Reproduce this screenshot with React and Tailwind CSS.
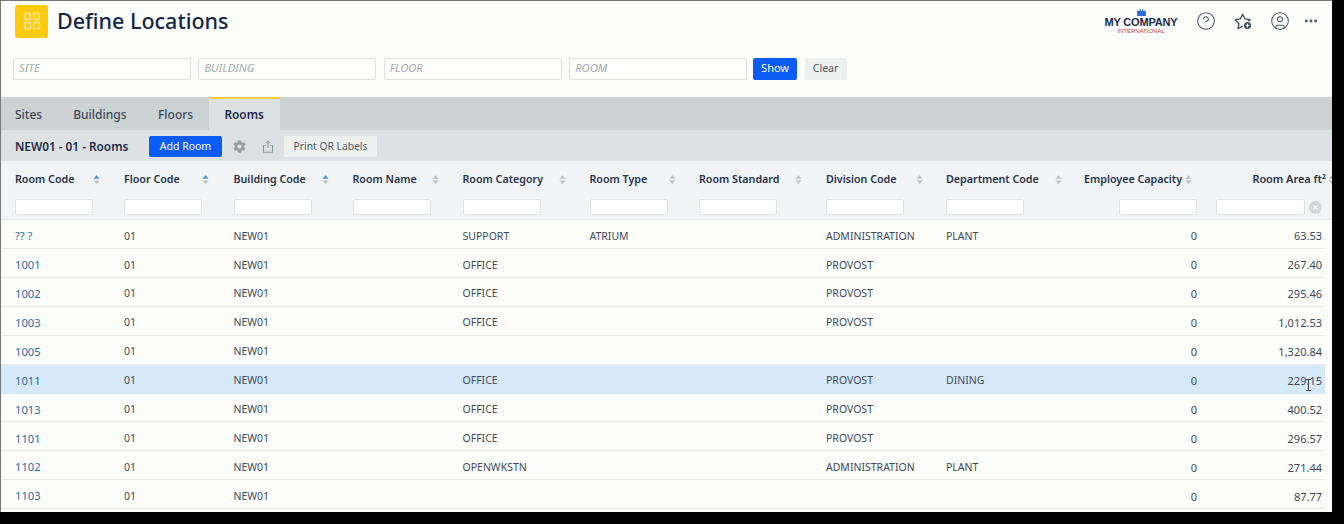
import React from "react";
import { CircleHelp, CircleUser, Ellipsis } from "lucide-react";
import { FaCog } from "react-icons/fa";

const font = { fontFamily: '"Noto Sans", sans-serif' };
const cols = "grid grid-cols-[109px_109.5px_119px_110px_127px_109.5px_127px_120px_138px_132px_109px]";

const headers = [
  ["Room Code", "asc", "w-[85px]"],
  ["Floor Code", "asc", "w-[85px]"],
  ["Building Code", "asc", "w-[95px]"],
  ["Room Name", "", "w-[86px]"],
  ["Room Category", "", "w-[103px]"],
  ["Room Type", "", "w-[86px]"],
  ["Room Standard", "", "w-[103px]"],
  ["Division Code", "", "w-[97px]"],
  ["Department Code", "", "w-[116px]"],
];

const rows = [
  ["?? ?", "01", "NEW01", "", "SUPPORT", "ATRIUM", "", "ADMINISTRATION", "PLANT", "0", "63.53"],
  ["1001", "01", "NEW01", "", "OFFICE", "", "", "PROVOST", "", "0", "267.40"],
  ["1002", "01", "NEW01", "", "OFFICE", "", "", "PROVOST", "", "0", "295.46"],
  ["1003", "01", "NEW01", "", "OFFICE", "", "", "PROVOST", "", "0", "1,012.53"],
  ["1005", "01", "NEW01", "", "", "", "", "", "", "0", "1,320.84"],
  ["1011", "01", "NEW01", "", "OFFICE", "", "", "PROVOST", "DINING", "0", "229.15"],
  ["1013", "01", "NEW01", "", "OFFICE", "", "", "PROVOST", "", "0", "400.52"],
  ["1101", "01", "NEW01", "", "OFFICE", "", "", "PROVOST", "", "0", "296.57"],
  ["1102", "01", "NEW01", "", "OPENWKSTN", "", "", "ADMINISTRATION", "PLANT", "0", "271.44"],
  ["1103", "01", "NEW01", "", "", "", "", "", "", "0", "87.77"],
];

function Sort({ active }) {
  return (
    <svg width="7" height="11" viewBox="0 0 8 12" className="shrink-0">
      <path d="M4 1 7.5 5H.5z" fill={active ? "#3f8fe0" : "#bcc2c6"} />
      <path d="M4 11 .5 7h7z" fill="#bcc2c6" />
    </svg>
  );
}

function FilterBox({ className }) {
  return <div className={`h-[16px] mt-[3px] bg-white border border-[#dfe2e4] rounded-[2px] ${className}`} />;
}

function SearchField({ label }) {
  return (
    <div className="w-[177.9px] h-[22px] border border-[#dcdfe0] rounded-[2px] bg-[#fefefc] pl-[5px] flex items-center text-[11.2px] italic text-[#a6abb0]">
      {label}
    </div>
  );
}

function Tab({ label, active, className }) {
  return (
    <div
      className={
        active
          ? "h-[33px] w-[71px] flex items-center justify-center bg-[#dde1e4] border-t-2 border-[#f2d23c] text-[#1b2a4a] font-semibold text-[11.8px] " + (className || "")
          : "h-[33px] flex items-center text-[#3c4a5c] font-medium text-[12px] pt-[2px] " + (className || "")
      }
    >
      {label}
    </div>
  );
}

export default function App() {
  return (
    <div className="w-[1344px] h-[524px] bg-black overflow-hidden" style={font}>
      <div className="w-[1332px] h-[512px] bg-[#fdfdfb] border-l border-t border-[#77797a] overflow-hidden relative">
        {/* title bar */}
        <div className="h-[40px] flex items-center pl-[14px] pr-[8px]">
          <div className="w-[33px] h-[33px] rounded-[3px] bg-[#ffca0a] flex items-center justify-center">
            <svg width="18" height="18" viewBox="0 0 18 18" fill="none" stroke="#fde9a0" strokeWidth="1.4">
              <rect x="1.5" y="1.5" width="6" height="6" rx="1" />
              <rect x="10.5" y="1.5" width="6" height="6" rx="1" />
              <rect x="1.5" y="10.5" width="6" height="6" rx="1" />
              <rect x="10.5" y="10.5" width="6" height="6" rx="1" />
            </svg>
          </div>
          <div className="ml-[9px] -mt-[1px] text-[21.5px] leading-[30px] font-medium text-[#13264a]">Define Locations</div>
          <div className="ml-auto flex items-center text-[#4d5865]">
            <div className="w-[74px] mr-[18px] flex flex-col items-center mt-[1px]">
              <svg width="9" height="7" viewBox="0 0 10 8" className="mb-[1px]">
                <path d="M0 2h3V0h1v2h2V0h1v2h3v6H0z" fill="#2b6fd0" />
              </svg>
              <div className="text-[11px] leading-[11px] font-bold text-[#1b2a4a] tracking-[-0.2px] whitespace-nowrap" style={{ fontFamily: '"Liberation Sans", sans-serif' }}>MY COMPANY</div>
              <div className="text-[6px] leading-[6px] text-[#c9453a] whitespace-nowrap" style={{ fontFamily: '"Liberation Sans", sans-serif' }}>INTERNATIONAL</div>
            </div>
            <CircleHelp size={20} strokeWidth={1.25} />
            <svg width="20" height="20" viewBox="0 0 20 20" className="ml-[17px]" fill="none" stroke="#4d5865" strokeWidth="1.4" strokeLinejoin="round">
              <path d="M9.5 15.2 5 17.6l.9-5.2L2.2 8.7l5.1-.8L9.6 3.2l2.3 4.7 5.1.8-1.6 1.6" />
              <circle cx="14.5" cy="14.5" r="3.6" fill="#4d5865" stroke="none" />
              <path d="M14.5 12.8v3.4M12.8 14.5h3.4" stroke="#fff" strokeWidth="1.1" />
            </svg>
            <CircleUser size={20} strokeWidth={1.25} className="ml-[17px]" />
            <Ellipsis size={16} strokeWidth={2.4} className="ml-[13px] mr-[5px]" />
          </div>
        </div>
        {/* search row */}
        <div className="h-[56px] flex items-center pl-[12px] gap-[7.5px] pb-[1px]">
          <SearchField label="SITE" />
          <SearchField label="BUILDING" />
          <SearchField label="FLOOR" />
          <SearchField label="ROOM" />
          <div className="h-[22px] w-[44px] ml-[-1.5px] rounded-[2px] bg-[#0a5cf5] text-white text-[11px] flex items-center justify-center">Show</div>
          <div className="h-[22px] w-[42px] rounded-[2px] bg-[#eef0f0] text-[#4d5865] text-[10.5px] flex items-center justify-center">Clear</div>
        </div>
        {/* tabs */}
        <div className="h-[33px] bg-[#cdd2d3] flex pl-[14px]">
          <Tab label="Sites" />
          <Tab label="Buildings" className="ml-[31px]" />
          <Tab label="Floors" className="ml-[31.5px]" />
          <Tab label="Rooms" active className="ml-[15.5px]" />
        </div>
        {/* toolbar */}
        <div className="h-[32px] pt-[2px] bg-[#dde1e4] flex items-center pl-[14px] border-b border-[#eceeef]">
          <div className="text-[11.8px] font-semibold text-[#1b2a4a] w-[134px]">NEW01 - 01 - Rooms</div>
          <div className="w-[73px] h-[21px] rounded-[2px] bg-[#0a5cf5] text-white text-[10.5px] flex items-center justify-center">Add Room</div>
          <FaCog size={13} className="ml-[11px] text-[#989ea3]" />
          <svg width="12" height="13" viewBox="0 0 12 13" className="ml-[16px]" fill="none" stroke="#8f979d" strokeWidth="1">
            <path d="M6 8V1M3.8 3 6 .8 8.2 3M3.5 5.5H1.5v6.7h9V5.5h-2" />
          </svg>
          <div className="ml-[10px] w-[93px] h-[21px] rounded-[2px] bg-[#eef0f0] text-[#4d5865] text-[10.3px] flex items-center justify-center">Print QR Labels</div>
        </div>
        {/* table header */}
        <div className={`${cols} pl-[14px] h-[58px] bg-[#f1f3f4] border-b border-[#e6e8ea]`}>
          {headers.map(([label, sort, w]) => (
            <div key={label} className="flex flex-col">
              <div className={`h-[34px] pt-[1px] flex items-center justify-between text-[10.7px] font-semibold text-[#25324a] whitespace-nowrap ${w}`}>
                <span>{label}</span>
                <Sort active={sort === "asc"} />
              </div>
              <FilterBox className="w-[78px]" />
            </div>
          ))}
          <div className="flex flex-col items-end pr-[19px]">
            <div className="h-[34px] pt-[1px] flex items-center gap-[3px] -mr-[1px] text-[10.7px] font-semibold text-[#25324a] whitespace-nowrap w-[114px]">
              <span>Employee Capacity</span>
              <Sort />
            </div>
            <FilterBox className="w-[78px]" />
          </div>
          <div className="flex flex-col relative">
            <div className="h-[34px] pt-[1px] flex items-center justify-end gap-[2px] text-[10.9px] font-semibold text-[#25324a] whitespace-nowrap w-[119px]">
              <span>Room Area ft²</span>
              <Sort />
            </div>
            <div className="flex items-center gap-[4px] mt-[3px]">
              <div className="h-[16px] w-[89px] bg-white border border-[#dfe2e4] rounded-[2px]" />
              <svg width="13" height="13" viewBox="0 0 13 13" className="shrink-0">
                <circle cx="6.5" cy="6.5" r="6.5" fill="#d3d6d8" />
                <path d="M4.3 4.3l4.4 4.4M8.7 4.3 4.3 8.7" stroke="#f4f5f6" strokeWidth="1.3" />
              </svg>
            </div>
          </div>
        </div>
        {/* rows */}
        {rows.map((r) => {
          const selected = r[0] === "1011";
          return (
            <div
              key={r[0]}
              className={`${cols} w-[1324px] pl-[14px] pt-[5px] h-[28.93px] items-center border-b text-[10.5px] text-[#3f4a58] ${selected ? "bg-[#d6e9fa] border-[#d6e9fa]" : "border-[#e6e8ea]"}`}
            >
              {r.map((c, i) => (
                <div
                  key={i}
                  className={
                    i === 0
                      ? "text-[#2a6ca6] text-[11.2px]"
                      : i === 9
                      ? "text-right pr-[19px] text-[11px]"
                      : i === 10
                      ? "text-right pr-[3px] text-[11px]"
                      : ""
                  }
                >
                  {c}
                </div>
              ))}
            </div>
          );
        })}
        {/* text cursor */}
        <svg width="7" height="12" viewBox="0 0 7 12" className="absolute left-[1304px] top-[378px]" fill="none" stroke="#3a4450" strokeWidth="1">
          <path d="M1 .5h5M3.5.5v11M1 11.5h5" />
        </svg>
      </div>
    </div>
  );
}
